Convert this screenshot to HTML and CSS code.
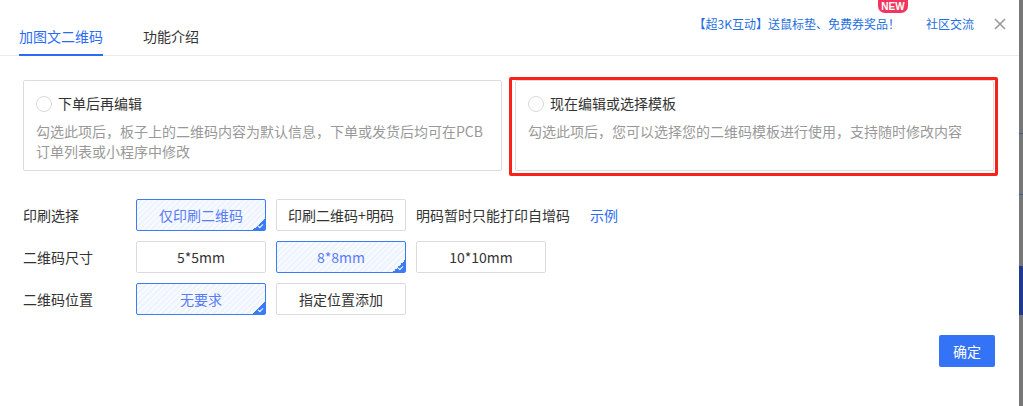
FILE: index.html
```
<!DOCTYPE html>
<html>

<head>
  <title>加图文二维码</title>
  <meta charset="UTF-8">
  <meta name="viewport" content="width=device-width, initial-scale=1">
  <link rel="stylesheet" href="styles.css">
</head>

<body>
  <div class="modal">
    <div class="modal-header">
      <div class="tabs">
        <div class="tab active">加图文二维码</div>
        <div class="tab">功能介绍</div>
      </div>
      <div class="header-links">
        <a class="promo">【超3K互动】送鼠标垫、免费券奖品！<span class="badge-new">NEW</span></a>
        <a class="community">社区交流</a>
        <span class="close">
          <svg width="12" height="12" viewBox="0 0 12 12"><path d="M1 1L11 11M11 1L1 11" stroke="#9a9a9a" stroke-width="1.6" fill="none"/></svg>
        </span>
      </div>
    </div>

    <div class="cards">
      <div class="card">
        <div class="card-title"><span class="radio"></span>下单后再编辑</div>
        <div class="card-desc">勾选此项后，板子上的二维码内容为默认信息，下单或发货后均可在PCB订单列表或小程序中修改</div>
      </div>
      <div class="card marked">
        <div class="card-title"><span class="radio"></span>现在编辑或选择模板</div>
        <div class="card-desc">勾选此项后，您可以选择您的二维码模板进行使用，支持随时修改内容</div>
        <div class="mark"></div>
      </div>
    </div>

    <div class="options">
      <div class="option-row">
        <div class="option-label">印刷选择</div>
        <div class="choice selected">仅印刷二维码<span class="corner"></span></div>
        <div class="choice">印刷二维码+明码</div>
        <div class="hint">明码暂时只能打印自增码</div>
        <a class="example">示例</a>
      </div>
      <div class="option-row">
        <div class="option-label">二维码尺寸</div>
        <div class="choice">5*5mm</div>
        <div class="choice selected">8*8mm<span class="corner"></span></div>
        <div class="choice">10*10mm</div>
      </div>
      <div class="option-row">
        <div class="option-label">二维码位置</div>
        <div class="choice selected">无要求<span class="corner"></span></div>
        <div class="choice">指定位置添加</div>
      </div>
    </div>

    <div class="footer">
      <button class="btn-ok">确定</button>
    </div>
  </div>
  <div class="backdrop-edge"></div>
</body>
</html>
```

FILE: styles.css
```
*{
  box-sizing:border-box;
}

body,
html {
  height: 100%;
  margin:0;
  font-family: "Noto Sans CJK SC", "Liberation Sans", sans-serif;
  font-size:14px;
  color:#333;
}

body {
  display:flex;
  overflow:hidden;
}

a{
  color:inherit;
  text-decoration:none;
}

.modal{
  width:1019px;
  height:100%;
  background:#fff;
  position:relative;
}

.backdrop-edge{
  flex:1;
  background:
    linear-gradient(to bottom,
      #777 0, #777 133px, #3c5aa0 133px, #3c5aa0 134px,
      #777 134px, #777 194px, #3c5aa0 194px, #3c5aa0 195px,
      #777 195px, #777 266px, #1e3a8c 266px, #1e3a8c 315px,
      #777 315px);
}

/* header */
.modal-header{
  height:56px;
  border-bottom:1px solid #ebebeb;
  display:flex;
  justify-content:space-between;
  padding:0 13px 0 19px;
}

.tabs{
  display:flex;
  align-items:flex-end;
  gap:40px;
}
.tab{
  line-height:20px;
  padding-bottom:8px;
  border-bottom:2px solid transparent;
  margin-bottom:-1px;
  color:#333;
}
.tab.active{
  color:#2b6cf6;
  border-bottom-color:#2b6cf6;
}

.header-links{
  display:flex;
  align-items:center;
  height:16px;
  margin-top:16px;
  font-size:12px;
  line-height:16px;
  color:#1f6fe0;
}
.promo{
  position:relative;
  margin-right:26px;
}
.badge-new{
  position:absolute;
  top:-16px;
  right:-8px;
  width:30px;
  height:13px;
  border-radius:0 0 7px 7px;
  background:#f0365e;
  color:#fff;
  font-family:"Liberation Sans", sans-serif;
  font-weight:bold;
  font-size:10px;
  line-height:13px;
  text-align:center;
}
.community{
  margin-right:20px;
}
.close{
  display:flex;
  width:12px;
  height:12px;
}

/* cards */
.cards{
  display:flex;
  gap:13px;
  padding:24px 25px 0 23px;
}
.card{
  flex:1;
  position:relative;
  border:1px solid #dcdcdc;
  border-radius:2px;
  padding:12px 12px 9px;
}
.card-title{
  display:flex;
  align-items:center;
  line-height:20px;
  color:#333;
}
.radio{
  width:16px;
  height:16px;
  border:1px solid #d9d9d9;
  border-radius:50%;
  margin-right:6px;
  margin-top:1px;
}
.card-desc{
  margin-top:8px;
  line-height:20px;
  color:#999;
}
.mark{
  position:absolute;
  top:-4px;
  left:-7px;
  right:-5px;
  bottom:-6px;
  border:3px solid #f5231c;
  border-radius:2px;
}

/* options */
.options{
  padding:28px 0 0 23px;
  display:flex;
  flex-direction:column;
  gap:10px;
}
.option-row{
  display:flex;
  align-items:center;
  gap:10px;
}
.option-label{
  width:103px;
  color:#333;
}
.choice{
  position:relative;
  width:130px;
  height:32px;
  line-height:30px;
  text-align:center;
  border:1px solid #dcdcdc;
  border-radius:2px;
  color:#333;
}
.choice.selected{
  border-color:#3b7cf6;
  color:#5a7cf8;
  background:repeating-linear-gradient(135deg, #f7faff 0, #f7faff 2px, #eef4fe 2px, #eef4fe 4px);
}
.corner{
  position:absolute;
  right:0;
  bottom:0;
  width:12px;
  height:12px;
  background:linear-gradient(135deg, transparent 50%, #3b7cf6 50%);
}
.corner::after{
  content:"";
  position:absolute;
  right:2px;
  bottom:3px;
  width:4px;
  height:2px;
  border-left:1px solid #fff;
  border-bottom:1px solid #fff;
  transform:rotate(-45deg);
}
.hint{
  color:#333;
}
.example{
  margin-left:10px;
  color:#2b6cf6;
}

/* footer */
.footer{
  display:flex;
  justify-content:flex-end;
  padding:20px 24px 0 0;
}
.btn-ok{
  width:56px;
  height:32px;
  border:none;
  border-radius:2px;
  background:#3473f6;
  color:#fff;
  font-family:inherit;
  font-size:14px;
}
```
